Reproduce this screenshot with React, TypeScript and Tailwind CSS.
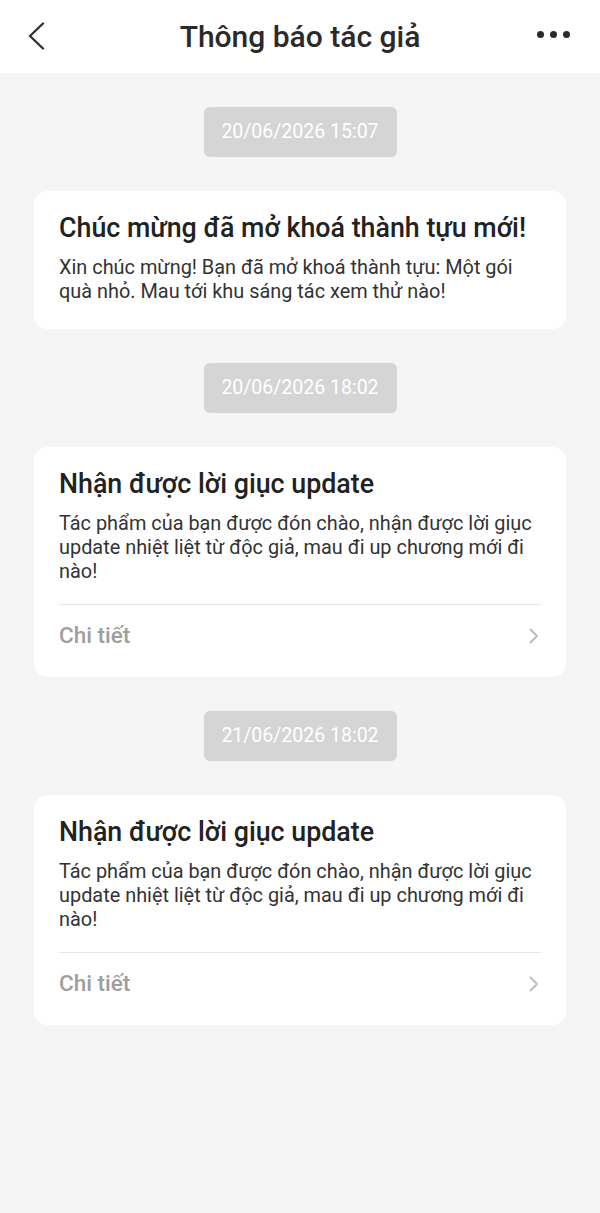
type Notice = {
  time: string;
  title: string;
  body: string;
  detail?: boolean;
};

const notices: Notice[] = [
  {
    time: "20/06/2026 15:07",
    title: "Chúc mừng đã mở khoá thành tựu mới!",
    body: "Xin chúc mừng! Bạn đã mở khoá thành tựu: Một gói quà nhỏ. Mau tới khu sáng tác xem thử nào!",
  },
  {
    time: "20/06/2026 18:02",
    title: "Nhận được lời giục update",
    body: "Tác phẩm của bạn được đón chào, nhận được lời giục update nhiệt liệt từ độc giả, mau đi up chương mới đi nào!",
    detail: true,
  },
  {
    time: "21/06/2026 18:02",
    title: "Nhận được lời giục update",
    body: "Tác phẩm của bạn được đón chào, nhận được lời giục update nhiệt liệt từ độc giả, mau đi up chương mới đi nào!",
    detail: true,
  },
];

function Header() {
  return (
    <header className="flex h-[73px] items-center bg-white px-[27px]">
      <div className="flex w-[60px]">
        <svg width="18" height="28" viewBox="0 0 18 28" fill="none" className="-mt-[1px]">
          <path d="M16 1.5 L3 14 L16 26.5" stroke="#333" strokeWidth="2.4" strokeLinecap="round" strokeLinejoin="round" />
        </svg>
      </div>
      <h1 className="flex-1 text-center text-[30px] font-medium text-[#2a2a2a]">Thông báo tác giả</h1>
      <div className="-mt-[4px] flex w-[60px] justify-end gap-[6px] pr-[3px]">
        <span className="h-[7px] w-[7px] rounded-full bg-[#2a2a2a]" />
        <span className="h-[7px] w-[7px] rounded-full bg-[#2a2a2a]" />
        <span className="h-[7px] w-[7px] rounded-full bg-[#2a2a2a]" />
      </div>
    </header>
  );
}

function NoticeCard({ notice }: { notice: Notice }) {
  return (
    <div className="flex flex-col items-center gap-[34px]">
      <div className="flex h-[50px] w-[193px] items-center justify-center rounded-md bg-[#d5d5d5] text-[19.5px] text-white">
        {notice.time}
      </div>
      <div className="w-full rounded-[14px] bg-white px-[25px] pt-5">
        <h2 className="text-[26.8px] leading-[34px] font-medium text-[#222]">{notice.title}</h2>
        <p className="mt-[11px] text-[19.9px] leading-6 text-[#333]">{notice.body}</p>
        {notice.detail ? (
          <div className="mt-5 flex h-[73px] items-start justify-between border-t border-[#e8e8e8] pt-4">
            <span className="text-[22.5px] leading-7 font-medium text-[#9e9e9e]">Chi tiết</span>
            <svg width="10" height="16" viewBox="0 0 10 16" fill="none" className="mt-[7px] mr-[2px]">
              <path d="M1.5 1.5 L8 8 L1.5 14.5" stroke="#bdbdbd" strokeWidth="2" strokeLinecap="round" strokeLinejoin="round" />
            </svg>
          </div>
        ) : (
          <div className="h-[25px]" />
        )}
      </div>
    </div>
  );
}

export default function App() {
  return (
    <div className="min-h-[1213px] bg-[#f5f5f5] font-['Roboto',sans-serif]">
      <Header />
      <main className="flex flex-col gap-[34px] px-[34px] pt-[34px]">
        {notices.map((n, i) => (
          <NoticeCard key={i} notice={n} />
        ))}
      </main>
    </div>
  );
}
